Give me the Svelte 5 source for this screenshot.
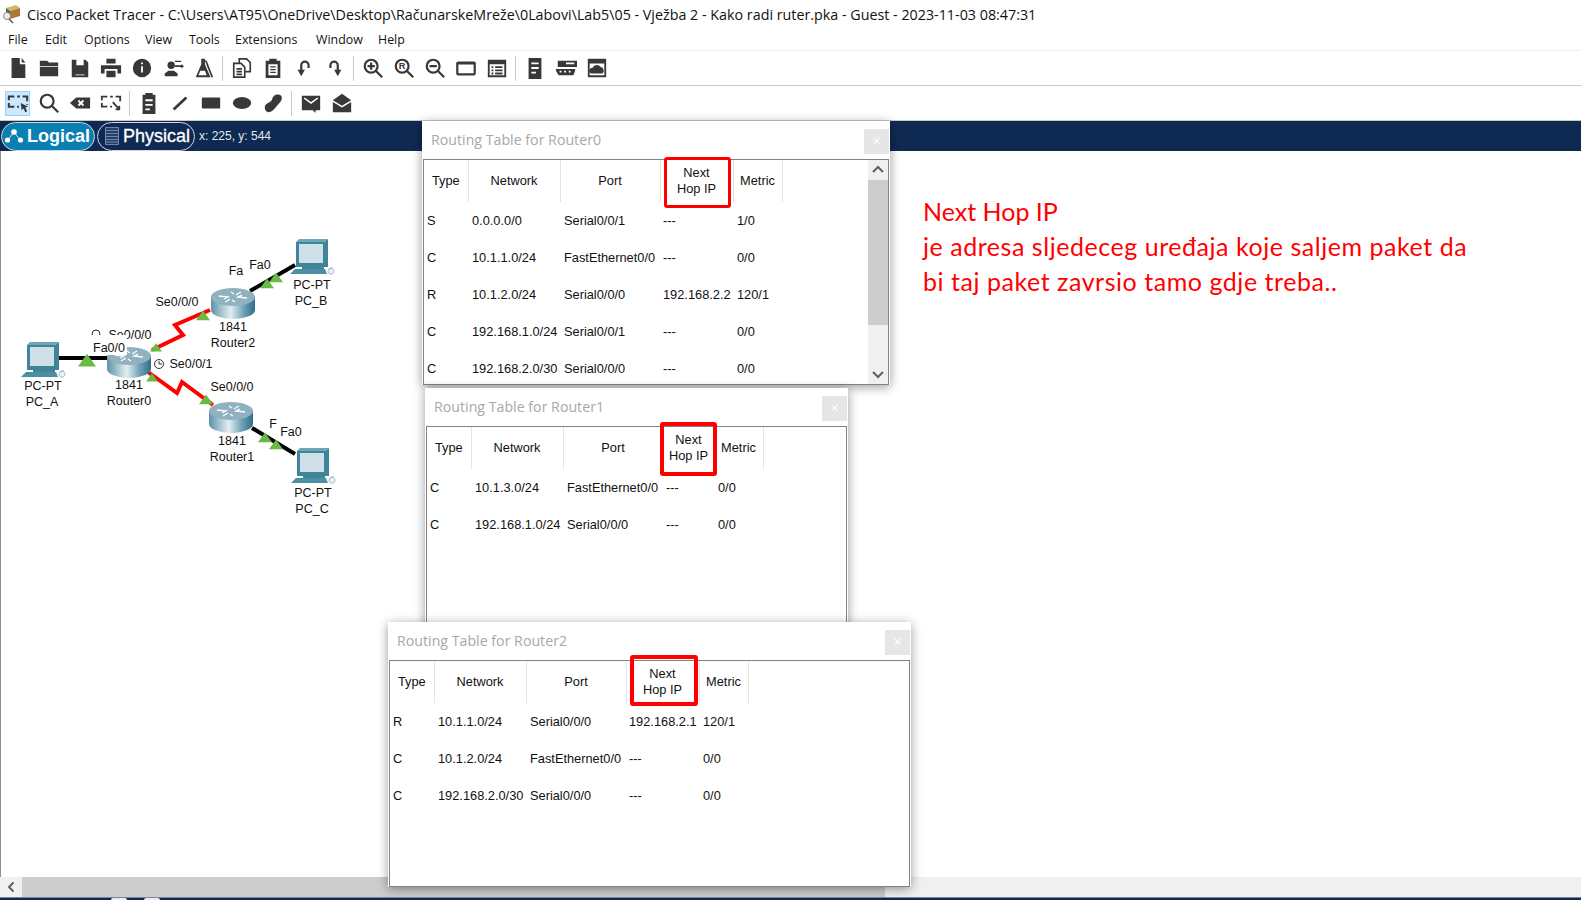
<script>
    const menus = [
        ["File", 8],
        ["Edit", 45],
        ["Options", 84],
        ["View", 145],
        ["Tools", 189],
        ["Extensions", 235],
        ["Window", 316],
        ["Help", 378],
    ];

    const dialogs = [
        {
            name: "Router0",
            x: 422,
            y: 121,
            w: 468,
            h: 264,
            cols: [44, 92, 100, 73, 49],
            box: { x: 242, y: 36, w: 67, h: 51, b: 3 },
            scroll: true,
            rows: [
                ["S", "0.0.0.0/0", "Serial0/0/1", "---", "1/0"],
                ["C", "10.1.1.0/24", "FastEthernet0/0", "---", "0/0"],
                ["R", "10.1.2.0/24", "Serial0/0/0", "192.168.2.2", "120/1"],
                ["C", "192.168.1.0/24", "Serial0/0/1", "---", "0/0"],
                ["C", "192.168.2.0/30", "Serial0/0/0", "---", "0/0"],
            ],
        },
        {
            name: "Router1",
            x: 425,
            y: 388,
            w: 423,
            h: 240,
            cols: [44, 92, 100, 51, 49],
            box: { x: 235, y: 34, w: 57, h: 54, b: 4 },
            rows: [
                ["C", "10.1.3.0/24", "FastEthernet0/0", "---", "0/0"],
                ["C", "192.168.1.0/24", "Serial0/0/0", "---", "0/0"],
            ],
        },
        {
            name: "Router2",
            x: 388,
            y: 622,
            w: 523,
            h: 265,
            cols: [44, 92, 100, 73, 49],
            box: { x: 242, y: 33, w: 68, h: 51, b: 4 },
            rows: [
                ["R", "10.1.1.0/24", "Serial0/0/0", "192.168.2.1", "120/1"],
                ["C", "10.1.2.0/24", "FastEthernet0/0", "---", "0/0"],
                ["C", "192.168.2.0/30", "Serial0/0/0", "---", "0/0"],
            ],
        },
    ];

    const routers = [
        { x: 129, y: 362, label: "Router0", lx: 129, ly: 385 },
        { x: 233, y: 303, label: "Router2", lx: 233, ly: 327 },
        { x: 231, y: 417, label: "Router1", lx: 232, ly: 441 },
    ];
    const pcs = [
        { x: 42, y: 345, label: "PC_A", lx: 43, ly: 386 },
        { x: 311, y: 242, label: "PC_B", lx: 312, ly: 285 },
        { x: 312, y: 451, label: "PC_C", lx: 313, ly: 493 },
    ];
    const lights = [
        [87, 361, 9],
        [156, 348, 6],
        [203, 316, 7],
        [267, 284, 7],
        [276, 278, 7],
        [152, 378, 6],
        [206, 400, 7],
        [265, 438, 7],
        [276, 445, 7],
    ];
    const ports = [
        ["Se0/0/0", 177, 306],
        ["Se0/0/1", 191, 368],
        ["Se0/0/0", 232, 391],
        ["Fa0", 260, 269],
        ["Fa0", 291, 436],
    ];
</script>

<div class="app">
    <div class="titlebar">
        <svg class="logo" viewBox="0 0 20 20" width="20" height="20">
            <path d="M4 4l10-3 4 3-10 3z" fill="#d9b36a" />
            <path d="M4 4l4 3v8l-4-3z" fill="#2f7d32" />
            <path d="M8 7l10-3v8l-10 3z" fill="#a9792f" />
            <circle cx="5" cy="12" r="3.5" fill="#eee" stroke="#888" />
            <path d="M7 15l4 4" stroke="#555" stroke-width="1.5" />
        </svg>
        <span>Cisco Packet Tracer - C:\Users\AT95\OneDrive\Desktop\RačunarskeMreže\0Labovi\Lab5\05 - Vježba 2 - Kako radi ruter.pka - Guest - 2023-11-03 08:47:31</span>
    </div>

    <div class="menubar">
        {#each menus as [label, x]}
            <span class="menu" style="left: {x}px">{label}</span>
        {/each}
    </div>

    <div class="toolbar first">
        <div class="ib"><svg viewBox="0 0 24 24"><path d="M5 1h9v7h6v15H5zM16 1l4 5h-4z" /></svg></div>
        <div class="ib"><svg viewBox="0 0 24 24"><path d="M2 4h8l2 2h10v4H2zM2 11h20v10H2z" /></svg></div>
        <div class="ib"><svg viewBox="0 0 24 24"><path fill-rule="evenodd" d="M3 3h15l3 3v16H3zM8 3v6h8V3zM7 19v1h10v-1z" /></svg></div>
        <div class="ib"><svg viewBox="0 0 24 24"><path d="M7 2h10v5H7zM1 9h22v9h-4v-5H5v5H1zM7 15h10v7H7z" /></svg></div>
        <div class="ib"><svg viewBox="0 0 24 24"><path fill-rule="evenodd" d="M12 2a10 10 0 1 0 0 20a10 10 0 1 0 0-20zM11 6h2v2h-2zM11 10h2v7h-2z" /></svg></div>
        <div class="ib"><svg viewBox="0 0 24 24"><circle cx="10" cy="9" r="4" /><path d="M3 21v-3l4-3h6l4 3v3zM14 4h7v1.5h-7zM14 9h7V7.5l3 2.5-3 2.5V11h-7z" /></svg></div>
        <div class="ib"><svg viewBox="0 0 24 24"><path fill-rule="evenodd" d="M9 2h4v1l1 1-1 1v3l6 14H3L9 8zM8 15l-2 5h9l-2-5z" /><path d="M15 4l7 18h-2L13 4z" /></svg></div>
        <div class="sep"></div>
        <div class="ib"><svg viewBox="0 0 24 24" class="line thin"><path d="M9 7V2h8l4 4v10h-5M3 7h8l4 4v11H3zM6 13h6M6 16h6M6 19h6" /></svg></div>
        <div class="ib"><svg viewBox="0 0 24 24"><path fill-rule="evenodd" d="M4 4h4V2h8v2h4v19H4zM7 8v12h10V8zM9 10h6v1.5H9zM9 13h6v1.5H9zM9 16h6v1.5H9z" /></svg></div>
        <div class="ib"><svg viewBox="0 0 24 24" class="line"><path d="M17 12V9a4 4 0 0 0-8 0v9" /><path class="solid" d="M5 14h8l-4 7z" /></svg></div>
        <div class="ib"><svg viewBox="0 0 24 24" class="line"><path d="M7 12V9a4 4 0 0 1 8 0v9" /><path class="solid" d="M11 14h8l-4 7z" /></svg></div>
        <div class="sep"></div>
        <div class="ib"><svg viewBox="0 0 24 24" class="line"><circle cx="10" cy="10" r="7" /><path d="M15 15l7 7M6 10h8M10 6v8" /></svg></div>
        <div class="ib"><svg viewBox="0 0 24 24" class="line"><circle cx="10" cy="10" r="7" /><path d="M15 15l7 7" /><text x="10" y="13.5" text-anchor="middle" class="r">R</text></svg></div>
        <div class="ib"><svg viewBox="0 0 24 24" class="line"><circle cx="10" cy="10" r="7" /><path d="M15 15l7 7M6 10h8" /></svg></div>
        <div class="ib"><svg viewBox="0 0 24 24" class="line"><rect x="2.5" y="6" width="19" height="13" rx="1" /><path d="M2 7h20" /></svg></div>
        <div class="ib"><svg viewBox="0 0 24 24"><path fill-rule="evenodd" d="M2 3h20v19H2zM4 8v12h16V8zM6 10h2v2H6zM10 10h8v2h-8zM6 13.5h2v2H6zM10 13.5h8v2h-8zM6 17h2v2H6zM10 17h8v2h-8z" /></svg></div>
        <div class="sep"></div>
        <div class="ib"><svg viewBox="0 0 24 24"><path fill-rule="evenodd" d="M5 1h14v23H5zM8 6v2h8V6zM8 11v2h8v-2zM8 16v2h5v-2z" /></svg></div>
        <div class="ib"><svg viewBox="0 0 24 24"><path fill-rule="evenodd" d="M3 4h21v7H3zM12 6v2h9V6zM1 13h21v2l-2 5H4l-3-5zM5 15v2h2v-2zM10 15v2h2v-2zM15 15v2h2v-2z" /></svg></div>
        <div class="ib"><svg viewBox="0 0 24 24"><path fill-rule="evenodd" d="M2 2h20v20H2zM4 7v13h16V7z" /><path d="M6 18a3 3 0 0 1 1-6a5 5 0 0 1 9-1a4 4 0 0 1 2 7z" /></svg></div>
    </div>

    <div class="toolbar">
        <div class="ib active"><svg viewBox="0 0 24 24" class="line thin"><path d="M2 9V5h6M11 5h3M17 5h5v5M22 13v1M2 12v4h6M11 16h2" stroke-width="2.2" /><path class="solid" d="M15 12l8 4-3 1 2 4-2 1-2-4-2 2z" /></svg></div>
        <div class="ib"><svg viewBox="0 0 24 24" class="line"><circle cx="10" cy="10" r="7" /><path d="M15 15l7 7" /></svg></div>
        <div class="ib"><svg viewBox="0 0 24 24"><path fill-rule="evenodd" d="M1 12l7-6h15v12H8zM11 8.5l-1.500 1.500 2 2-2 2 1.500 1.500 2-2 2 2 1.500-1.500-2-2 2-2L15 8.500l-2 2z" /></svg></div>
        <div class="ib"><svg viewBox="0 0 24 24" class="line thin"><path d="M2 9V5h6M11 5h3M17 5h5v5M2 12v4h6M11 16h2M14 11l7 8M21 15v4h-4" stroke-width="2" /></svg></div>
        <div class="sep"></div>
        <div class="ib"><svg viewBox="0 0 24 24"><path fill-rule="evenodd" d="M5 3h3V1h8v2h3v21H5zM8 8v2h8V8zM8 13v2h8v-2zM8 18v2h5v-2z" /></svg></div>
        <div class="ib"><svg viewBox="0 0 24 24" class="line"><path d="M5 19L19 6" stroke-width="3" /></svg></div>
        <div class="ib"><svg viewBox="0 0 24 24"><rect x="2" y="6" width="20" height="12" rx="1" /></svg></div>
        <div class="ib"><svg viewBox="0 0 24 24"><ellipse cx="12" cy="12" rx="10" ry="6.500" /></svg></div>
        <div class="ib"><svg viewBox="0 0 24 24"><path d="M3 17c0-5 7-5 8-9s4-6 8-5 3 6 0 9-4 5-7 8-9 3-9-3z" /></svg></div>
        <div class="sep"></div>
        <div class="ib"><svg viewBox="0 0 24 24"><path fill-rule="evenodd" d="M2 4h20v16h-5v3l-3-3H2zM4 7l8 6 8-6-1-1-7 5-7-5z" /></svg></div>
        <div class="ib"><svg viewBox="0 0 24 24"><path d="M12 2l10 7-10 6L2 9zM2 11l10 6 10-6v11H2z" /></svg></div>
    </div>

    <div class="navbar">
        <div class="pill logical">
            <svg viewBox="0 0 20 20" width="20" height="20">
                <path d="M3 15L10 6l7 9" stroke="#fff" stroke-width="0.8" fill="none" />
                <circle cx="10" cy="6" r="2.800" fill="#fff" />
                <circle cx="3.500" cy="14" r="2.600" fill="#fff" />
                <circle cx="16.500" cy="14" r="2.600" fill="#fff" />
            </svg>
            <span>Logical</span>
        </div>
        <div class="pill physical">
            <svg viewBox="0 0 16 20" width="16" height="20">
                <path d="M1.500 1.500h13v17h-13zM1.500 4.500h13M1.500 7.500h13M1.500 10.500h13M1.500 13.500h13M1.500 16h13" fill="#24406a" stroke="#6f86a6" />
            </svg>
            <span>Physical</span>
        </div>
        <span class="coords">x: 225, y: 544</span>
    </div>

    <div class="canvas">
        <svg class="topology" viewBox="0 151 500 420" width="500" height="420">
            <defs>
                <linearGradient id="body" x1="0" x2="1" y1="0" y2="0">
                    <stop offset="0" stop-color="#5d93a8" />
                    <stop offset="0.45" stop-color="#e2eef2" />
                    <stop offset="0.75" stop-color="#6fa0b3" />
                    <stop offset="1" stop-color="#2c6f88" />
                </linearGradient>
                <g id="router">
                    <path d="M-22 -7v14a22 9 0 0 0 44 0v-14z" fill="url(#body)" />
                    <ellipse cx="0" cy="-6" rx="22" ry="9" fill="#8fb1c0" />
                    <path d="M-14 -7l9 1-4 2M14 -5l-9 -1 4 -2M-8 -1l5 -3M8 -11l-5 3M-2 -11l3 2M2 -1l-3 -2" stroke="#fff" stroke-width="1.300" fill="none" />
                </g>
                <g id="pc">
                    <path d="M-15 0h28l4 -3v28h-32z" fill="#3f8499" />
                    <path d="M-15 0l3 -3h29l-4 3z" fill="#6da6b6" />
                    <rect x="-12" y="2" width="24" height="19" fill="#cfe0e8" />
                    <rect x="-9" y="25" width="22" height="2" fill="#3f8499" />
                    <path d="M-21 32l5 -5h30l2 5z" fill="#4c8ea2" />
                    <path d="M18 28a3 3 0 0 1 4 -2M19 32a3 3 0 1 1 2 0z" stroke="#8fb1c0" fill="#e8f0f3" stroke-width="0.800" />
                </g>
            </defs>

            <g class="links">
                <path d="M58 358H108" class="black" />
                <path d="M250 291L295 265" class="black" />
                <path d="M252 428L295 454" class="black" />
                <path d="M152 350L183 335L175 325L210 310" class="red" />
                <path d="M148 372L177 393L182 382L213 405" class="red" />
            </g>

            <text x="130" y="339" class="lbl" text-anchor="middle">Se0/0/0</text>
            <circle cx="96" cy="334" r="4" fill="#fff" stroke="#333" />

            {#each routers as r}
                <use href="#router" x={r.x} y={r.y} />
                <text x={r.lx} y={r.ly + 4} class="lbl" text-anchor="middle">1841</text>
                <text x={r.lx} y={r.ly + 20} class="lbl" text-anchor="middle">{r.label}</text>
            {/each}

            {#each pcs as p}
                <use href="#pc" x={p.x} y={p.y} />
                <text x={p.lx} y={p.ly + 4} class="lbl" text-anchor="middle">PC-PT</text>
                <text x={p.lx - 1} y={p.ly + 20} class="lbl" text-anchor="middle">{p.label}</text>
            {/each}

            {#each lights as [x, y, s]}
                <path d="M{x - s} {y + s * 0.6}L{x} {y - s * 0.8}L{x + s} {y + s * 0.6}z" fill="#69b944" />
            {/each}

            <rect x="88" y="335" width="39" height="20" fill="#fff" />
            <text x="109" y="352" class="lbl" text-anchor="middle">Fa0/0</text>
            <rect x="227" y="263" width="17" height="15" fill="#fff" />
            <text x="236" y="275" class="lbl" text-anchor="middle">Fa</text>
            <text x="273" y="428" class="lbl" text-anchor="middle">F</text>

            <circle cx="159" cy="364" r="4.500" fill="#fff" stroke="#333" />
            <path d="M159 361v3h3" stroke="#333" fill="none" />

            {#each ports as [label, x, y]}
                <text {x} {y} class="lbl" text-anchor="middle">{label}</text>
            {/each}
        </svg>

        <p class="note">
            Next Hop IP<br />
            <span>je adresa sljedeceg uređaja koje saljem paket da</span><br />
            <span>bi taj paket zavrsio tamo gdje treba..</span>
        </p>

        {#each dialogs as d}
            <div
                class="dialog"
                style="left: {d.x}px; top: {d.y - 151}px; width: {d.w}px; height: {d.h}px"
            >
                <div class="dialog-title">
                    <span>Routing Table for {d.name}</span>
                    <div class="close">×</div>
                </div>
                <div class="dialog-body">
                    <div class="table-wrap">
                        <table>
                            <colgroup>
                                {#each d.cols as c}
                                    <col style="width: {c}px" />
                                {/each}
                            </colgroup>
                            <thead>
                                <tr>
                                    <th>Type</th>
                                    <th>Network</th>
                                    <th>Port</th>
                                    <th>Next<br />Hop IP</th>
                                    <th>Metric</th>
                                    <th class="empty"></th>
                                </tr>
                            </thead>
                            <tbody>
                                {#each d.rows as row}
                                    <tr>
                                        {#each row as cell}
                                            <td>{cell}</td>
                                        {/each}
                                        <td></td>
                                    </tr>
                                {/each}
                            </tbody>
                        </table>
                    </div>
                    {#if d.scroll}
                        <div class="vscroll">
                            <svg viewBox="0 0 20 20" width="20" height="20"><path d="M5 12l5-5 5 5" /></svg>
                            <div class="vthumb"></div>
                            <svg viewBox="0 0 20 20" width="20" height="20"><path d="M5 8l5 5 5-5" /></svg>
                        </div>
                    {/if}
                </div>
                <div
                    class="callout"
                    style="left: {d.box.x}px; top: {d.box.y}px; width: {d.box.w}px; height: {d.box.h}px; border-width: {d.box.b}px"
                ></div>
            </div>
        {/each}
    </div>

    <div class="hscroll">
        <div class="harrow">
            <svg viewBox="0 0 12 12" width="12" height="12"><path d="M8.500 1.500L4 6l4.500 4.500" /></svg>
        </div>
        <div class="hthumb"></div>
    </div>
    <div class="strip">
        <i></i>
        <i></i>
    </div>
</div>

<style>
    :global(body) {
        margin: 0;
        overflow: hidden;
        background: #fff;
    }

    .app {
        width: 1581px;
        height: 900px;
        display: flex;
        flex-direction: column;
        overflow: hidden;
        font-family: "Liberation Sans", Arial, sans-serif;
        color: #111;
    }

    .titlebar {
        height: 28px;
        display: flex;
        align-items: center;
        gap: 5px;
        padding-left: 2px;
        box-sizing: border-box;
        font-family: "Open Sans", sans-serif;
        font-size: 14.3px;
        white-space: nowrap;
        flex: none;
    }

    .logo {
        flex: none;
    }

    .menubar {
        position: relative;
        height: 22px;
        flex: none;
        font-family: "Open Sans", sans-serif;
        font-size: 12.4px;
    }

    .menu {
        position: absolute;
        top: 3px;
    }

    .toolbar {
        height: 35px;
        flex: none;
        box-sizing: border-box;
        display: flex;
        align-items: center;
        padding-left: 2px;
        border-bottom: 1px solid #c9c9c9;
    }

    .toolbar.first {
        height: 36px;
        border-top: 1px solid #eee;
    }

    .ib {
        width: 31px;
        height: 25px;
        display: flex;
        align-items: center;
        justify-content: center;
        flex: none;
        box-sizing: border-box;
    }

    .ib svg {
        width: 22px;
        height: 22px;
        fill: #383838;
    }

    .ib.active {
        background: #cce8ff;
        outline: 1px solid #99d1ff;
        outline-offset: -1px;
        width: 25px;
        margin: 0 3px;
    }

    .line {
        fill: none !important;
        stroke: #383838;
        stroke-width: 2.4;
    }

    .line.thin {
        stroke-width: 1.8;
    }

    .line .solid {
        fill: #383838;
        stroke: none;
    }

    .line .r {
        font-family: "Liberation Sans", sans-serif;
        font-size: 10px;
        font-weight: bold;
        fill: #383838;
        stroke: none;
    }

    .sep {
        width: 1px;
        height: 25px;
        margin: 0 3px;
        background: #c9c9c9;
        flex: none;
    }

    .navbar {
        height: 30px;
        flex: none;
        background: #0f2a52;
        display: flex;
        align-items: center;
        gap: 2px;
        padding-left: 1px;
    }

    .pill {
        height: 29px;
        box-sizing: border-box;
        border: 1px solid #cfd8e3;
        border-radius: 15px;
        display: flex;
        align-items: center;
        gap: 3px;
        padding-left: 2px;
        color: #fff;
        font-size: 18px;
    }

    .logical {
        width: 94px;
        background: #0a7fb3;
        font-weight: bold;
    }

    .physical {
        width: 98px;
        padding-left: 6px;
        -webkit-text-stroke: 0.3px #fff;
    }

    .coords {
        color: #e4e8ee;
        font-size: 12px;
        margin-left: 2px;
    }

    .canvas {
        position: relative;
        flex: 1;
        background: #fff;
        border-left: 1px solid #8b8f96;
    }

    .topology {
        position: absolute;
        left: -1px;
        top: 0;
    }

    .links path {
        fill: none;
        stroke-width: 4;
    }

    .black {
        stroke: #000;
    }

    .red {
        stroke: #f00;
    }

    .lbl {
        font-family: "Liberation Sans", Arial, sans-serif;
        font-size: 12.5px;
        fill: #111;
    }

    .note {
        position: absolute;
        left: 922px;
        top: 43px;
        margin: 0;
        font-family: Lato, sans-serif;
        font-size: 25px;
        line-height: 35px;
        color: #f00;
        white-space: nowrap;
    }

    .note span {
        letter-spacing: 0.54px;
    }

    .dialog {
        position: absolute;
        margin-left: -1px;
        background: #fff;
        box-shadow: 0 2px 10px rgba(0, 0, 0, 0.4);
        display: flex;
        flex-direction: column;
        overflow: hidden;
    }

    .dialog-title {
        height: 38px;
        flex: none;
        box-sizing: border-box;
        display: flex;
        justify-content: space-between;
        padding: 0 1px 0 9px;
        font-family: "Open Sans", sans-serif;
        font-size: 14.2px;
        color: #a8a8a8;
    }

    .dialog-title span {
        margin-top: 9px;
    }

    .close {
        width: 25px;
        height: 25px;
        margin-top: 8px;
        background: #e6e6e6;
        color: #fff;
        text-align: center;
        line-height: 24px;
        font-size: 14px;
    }

    .dialog-body {
        flex: 1;
        min-height: 0;
        margin: 0 1px 0;
        border: 1px solid #80828a;
        display: flex;
        overflow: hidden;
    }

    .table-wrap {
        flex: 1;
        min-width: 0;
        overflow: hidden;
    }

    table {
        border-collapse: collapse;
        table-layout: fixed;
        width: 100%;
        font-size: 12.8px;
    }

    th {
        height: 42px;
        padding: 0;
        font-weight: normal;
        line-height: 16px;
        text-align: center;
        white-space: nowrap;
        border-right: 1px solid #e4e4e4;
    }

    th.empty {
        border: none;
    }

    td {
        height: 37px;
        padding: 0 0 0 4px;
        white-space: nowrap;
        overflow: visible;
    }

    td:first-child,
    td:nth-child(4) {
        padding-left: 3px;
    }

    .vscroll {
        width: 20px;
        flex: none;
        background: #f0f0f0;
        display: flex;
        flex-direction: column;
    }

    .vscroll svg {
        flex: none;
    }

    .vscroll path,
    .harrow path {
        fill: none;
        stroke: #606060;
        stroke-width: 2;
    }

    .vthumb {
        height: 145px;
        background: #cdcdcd;
        margin-bottom: auto;
    }

    .callout {
        position: absolute;
        box-sizing: border-box;
        border: 4px solid #f00;
        border-radius: 3px;
    }

    .hscroll {
        height: 20px;
        flex: none;
        background: #f0f0f0;
        display: flex;
    }

    .harrow {
        width: 22px;
        display: flex;
        align-items: center;
        justify-content: center;
    }

    .hthumb {
        width: 863px;
        background: #cdcdcd;
    }

    .strip {
        height: 3px;
        flex: none;
        background: #0f2a52;
        border-top: 1px solid #7d8591;
        box-sizing: border-box;
        display: flex;
        gap: 17px;
        padding-left: 111px;
    }

    .strip i {
        width: 16px;
        background: #e8edf3;
        border-radius: 4px 4px 0 0;
    }
</style>
